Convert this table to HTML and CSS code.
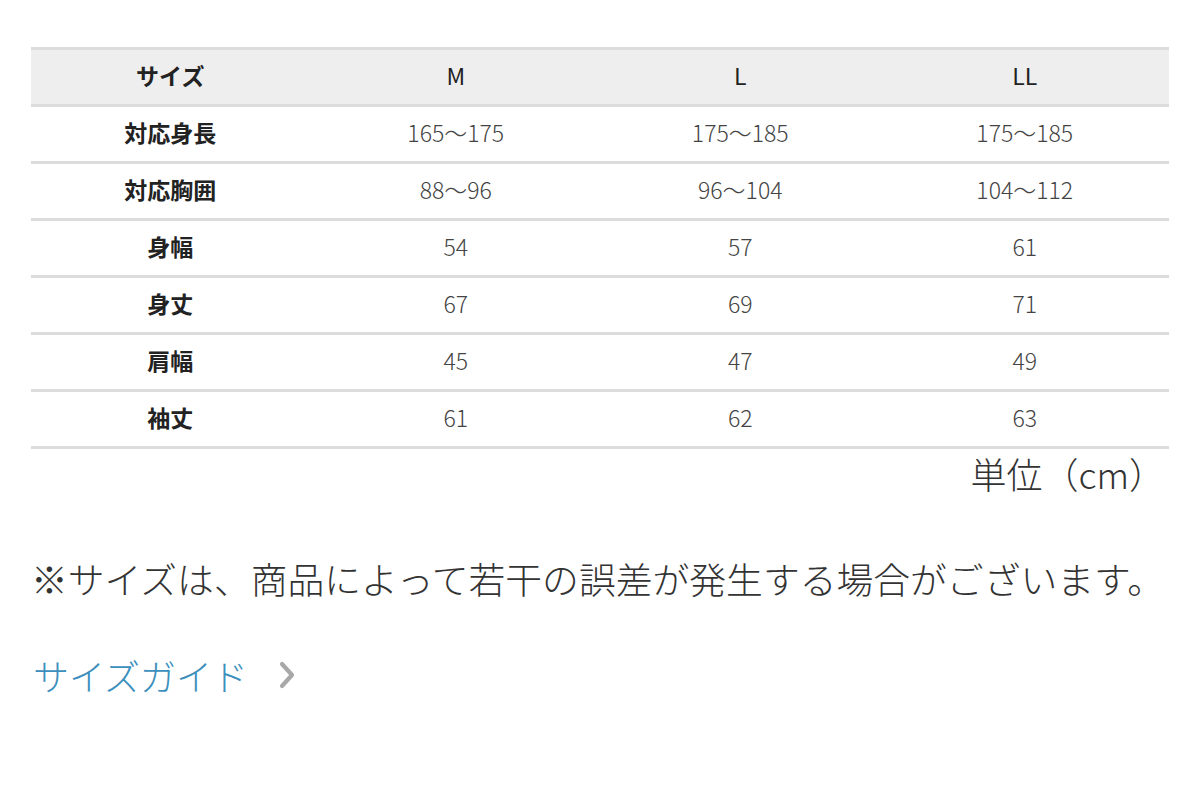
FILE: index.html
```html
<!DOCTYPE html>
<html lang="ja">
<head>
<meta charset="utf-8">
<link rel="stylesheet" href="styles.css">
</head>
<body>
<div class="page">
  <table class="size-table">
    <thead>
      <tr>
        <th class="rowhead">サイズ</th>
        <th>M</th>
        <th>L</th>
        <th>LL</th>
      </tr>
    </thead>
    <tbody>
      <tr><th class="rowhead">対応身長</th><td>165〜175</td><td>175〜185</td><td>175〜185</td></tr>
      <tr><th class="rowhead">対応胸囲</th><td>88〜96</td><td>96〜104</td><td>104〜112</td></tr>
      <tr><th class="rowhead">身幅</th><td>54</td><td>57</td><td>61</td></tr>
      <tr><th class="rowhead">身丈</th><td>67</td><td>69</td><td>71</td></tr>
      <tr><th class="rowhead">肩幅</th><td>45</td><td>47</td><td>49</td></tr>
      <tr><th class="rowhead">袖丈</th><td>61</td><td>62</td><td>63</td></tr>
    </tbody>
  </table>
  <div class="unit">単位（cm）</div>
  <p class="note">※サイズは、商品によって若干の誤差が発生する場合がございます。</p>
  <a class="guide" href="#">サイズガイド<svg class="chev" width="18" height="30" viewBox="0 0 18 30"><path d="M4 4 L14 15 L4 26" fill="none" stroke="#a8a8a8" stroke-width="4.2" stroke-linecap="round" stroke-linejoin="round"/></svg></a>
</div>
</body>
</html>
```

FILE: styles.css
```css
html, body {
  margin: 0;
  padding: 0;
  background: #fff;
}
body {
  font-family: "Noto Sans CJK JP", "Noto Sans", sans-serif;
  color: #333;
}
.page {
  padding: 47px 31px 0 31px;
}
.size-table {
  width: 1138px;
  border-collapse: collapse;
  table-layout: fixed;
}
.size-table th,
.size-table td {
  height: 50px;
  padding: 0 4px 4px 0;
  text-align: center;
  vertical-align: middle;
  font-size: 23px;
  border-bottom: 3px solid #dcdcdc;
}
.size-table .rowhead {
  padding-right: 6px;
}
.size-table thead tr {
  background: #eeeeee;
}
.size-table thead th {
  border-top: 3px solid #dcdcdc;
  font-weight: 400;
  color: #222;
}
.size-table .rowhead {
  font-weight: 700;
  color: #222;
}
.size-table td {
  font-weight: 300;
  color: #444;
}
.unit {
  text-align: right;
  padding-right: 4px;
  font-size: 36px;
  font-weight: 300;
  color: #333;
  line-height: 52px;
  margin-top: -2px;
}
.note {
  margin: 53px 0 0 0;
  font-size: 36.8px;
  font-weight: 300;
  color: #333;
  line-height: 52px;
  white-space: nowrap;
}
.guide {
  display: inline-flex;
  align-items: center;
  gap: 30px;
  margin-top: 45px;
  font-size: 36px;
  font-weight: 300;
  color: #3c8fbd;
  text-decoration: none;
  line-height: 52px;
  margin-left: 2px;
}
.chev {
  display: block;
}
```
